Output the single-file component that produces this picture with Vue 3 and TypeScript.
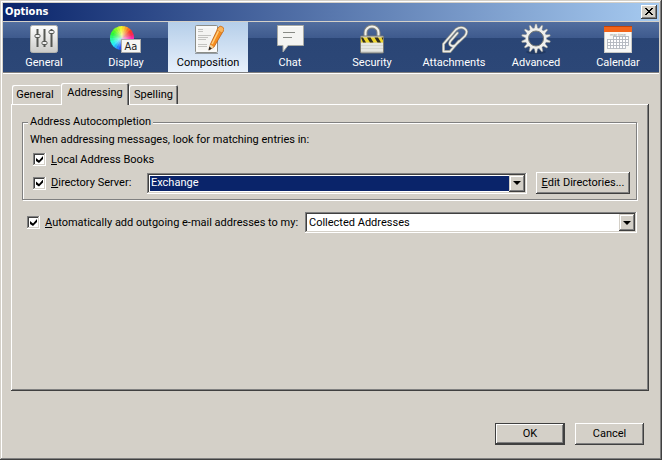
<script setup lang="ts">
import { ref } from 'vue'

interface Category {
  id: string
  label: string
}

const categories: Category[] = [
  { id: 'general', label: 'General' },
  { id: 'display', label: 'Display' },
  { id: 'composition', label: 'Composition' },
  { id: 'chat', label: 'Chat' },
  { id: 'security', label: 'Security' },
  { id: 'attachments', label: 'Attachments' },
  { id: 'advanced', label: 'Advanced' },
  { id: 'calendar', label: 'Calendar' },
]
const tabs = ['General', 'Addressing', 'Spelling']

const activeCategory = ref('composition')
const activeTab = ref('Addressing')
const useLocal = ref(true)
const useDirectory = ref(true)
const autoCollect = ref(true)
const directory = ref('Exchange')
const collectInto = ref('Collected Addresses')

// Colour wheel: 24 wedges, hue rising counter-clockwise
const wedges = Array.from({ length: 24 }, (_, i) => {
  const a = (i * 15 * Math.PI) / 180
  const b = ((i * 15 + 18) * Math.PI) / 180
  const point = (t: number) => `${(12 + 12 * Math.cos(t)).toFixed(2)} ${(16 - 12 * Math.sin(t)).toFixed(2)}`
  return { d: `M12 16L${point(a)}A12 12 0 0 0 ${point(b)}Z`, fill: `hsl(${(i * 15 + 335) % 360} 95% 55%)` }
})
const teeth = Array.from({ length: 14 }, (_, i) => (i * 360) / 14)
const gridCells = Array.from({ length: 28 }, (_, i) => i).filter((i) => i > 1 && i < 27)
</script>

<template>
  <main class="window">
    <header class="titlebar">
      <h1>Options</h1>
      <button class="close" type="button" aria-label="Close">
        <svg width="8" height="7" viewBox="0 0 8 7" shape-rendering="crispEdges">
          <path d="M0 0h2v1h1v1h2V1h1V0h2v1H7v1H6v1H5v1h1v1h1v1h1v1H6V6H5V5H3v1H2v1H0V6h1V5h1V4h1V3H2V2H1V1H0z" />
        </svg>
      </button>
    </header>

    <nav class="toolbar">
      <button
        v-for="c in categories"
        :key="c.id"
        type="button"
        class="category"
        :class="{ selected: activeCategory === c.id }"
        @click="activeCategory = c.id"
      >
        <svg class="icon" viewBox="0 0 32 32" aria-hidden="true">
          <g v-if="c.id === 'general'">
            <defs>
              <linearGradient id="plate" x2="0" y2="1"><stop stop-color="#fff" /><stop offset="1" stop-color="#cbcbc8" /></linearGradient>
            </defs>
            <rect x="2.5" y="3.5" width="27" height="27" rx="2" fill="url(#plate)" stroke="#b5b5b0" />
            <path d="M9.5 7v18M16.500 7v18M23.500 7v18" stroke="#555753" stroke-width="2" />
            <g fill="#eee" stroke="#555753">
              <rect x="7" y="12.500" width="5" height="3" rx="1" />
              <rect x="14" y="19.500" width="5" height="3" rx="1" />
              <rect x="21" y="8.500" width="5" height="3" rx="1" />
            </g>
          </g>
          <g v-else-if="c.id === 'display'">
            <defs>
              <radialGradient id="glow"><stop stop-color="#fff" stop-opacity=".75" /><stop offset=".8" stop-color="#fff" stop-opacity=".05" /></radialGradient>
            </defs>
            <path v-for="w in wedges" :key="w.d" :d="w.d" :fill="w.fill" />
            <circle cx="12" cy="16" r="12" fill="url(#glow)" />
            <rect x="11.500" y="17.500" width="19" height="13" fill="#f6f6f4" stroke="#aaa" />
            <text x="21" y="28" text-anchor="middle" class="sample">Aa</text>
          </g>
          <g v-else-if="c.id === 'composition'">
            <path d="M3 31.500h23" stroke="#555" stroke-opacity=".5" />
            <rect x="3.500" y="3.500" width="22" height="27" rx="1" fill="#f4f4f2" stroke="#8b8d88" />
            <path d="M5 5h19v24H5z" fill="none" stroke="#fff" />
            <path d="M6 7.500h5M6 9.500h5M6 13.500h13M6 15.500h10M6 17.500h8M6 22.500h9M6 24.500h9" stroke="#c3c3c0" />
            <path d="M17 28l1.500-6L26 6q2-3 4.500-1t.5 4.500L22 25z" fill="#f68d1e" stroke="#b45309" stroke-width=".7" />
            <path d="M20 22L27.500 7" stroke="#ffcf7c" stroke-width="1.500" />
            <path d="M26 6q2-3 4.500-1t.5 4.500l-1 1.500-5-3z" fill="#f9b45c" stroke="#c66a12" stroke-width=".5" />
            <path d="M17 28l1.300-5.500 3.500 2.600z" fill="#f0d29b" />
            <path d="M16.500 28.500l.8-4 2.500 2z" fill="#222" />
          </g>
          <g v-else-if="c.id === 'chat'">
            <path d="M3.500 3.500h26v20H14l-5 6.500v-6.500H3.500z" fill="#f4f4f2" stroke="#a8aaa5" />
            <path d="M4.500 4.500h24" stroke="#fff" />
            <path d="M9 10.500h12M9 15.500h9" stroke="#888a85" />
          </g>
          <g v-else-if="c.id === 'security'">
            <path d="M9.500 15v-4.500a6.500 6 0 0 1 13 0V15" fill="none" stroke="#85867f" stroke-width="4" />
            <path d="M9.500 15v-4.500a6.500 6 0 0 1 13 0V15" fill="none" stroke="#f2f2ed" stroke-width="2" />
            <rect x="4.500" y="14" width="23" height="17" rx="1" fill="#d5d6d0" stroke="#797a75" />
            <path d="M5 22h22M5 25h22M5 28h22" stroke="#f7f7f4" />
            <path d="M5 15.500h22v5H5z" fill="#eed52c" />
            <path d="M5 15.500h2l3 5H7zM11 15.500h3.500l3 5H14zM18.500 15.500H22l3 5h-3.500zM25.500 15.500H27v3z" fill="#302e20" />
          </g>
          <g v-else-if="c.id === 'attachments'" fill="none" stroke-linecap="round" stroke-linejoin="round">
            <path v-for="s in 2" :key="s" :stroke="s === 1 ? '#8b8e88' : '#eeeeea'" :stroke-width="s === 1 ? 3 : 1.600" d="M19.500 11l-7 8q-2 3 .5 4.500t5-1L27 14q3.500-5-.5-7.500t-8.500 1L5.500 22v7.500h6.500l9-10.500" />
          </g>
          <g v-else-if="c.id === 'advanced'">
            <ellipse cx="16" cy="30" rx="10" ry="2" fill="#172c50" opacity=".5" />
            <path v-for="t in teeth" :key="t" d="M14.200 7L15.300 2h1.400l1.100 5z" fill="#f0f0ed" stroke="#8c8e89" stroke-width=".5" :transform="`rotate(${t} 16 16.500)`" />
            <circle cx="16" cy="16.500" r="9" fill="none" stroke="#efefec" stroke-width="3" />
            <circle cx="16" cy="16.500" r="7.500" fill="none" stroke="#777a75" />
          </g>
          <g v-else>
            <rect x="2.500" y="4.500" width="27" height="26" fill="#f8f8f6" stroke="#c9c9c5" />
            <path d="M2 4h28v6H2z" fill="#f26419" />
            <path d="M2 4.500h28" stroke="#c44308" />
            <text x="16" y="13.500" text-anchor="middle" class="month">mar time</text>
            <rect
              v-for="n in gridCells"
              :key="n"
              :x="5.500 + (n % 7) * 3"
              :y="14.500 + Math.floor(n / 7) * 3"
              width="3"
              height="3"
              fill="#fff"
              stroke="#b4b9bf"
              stroke-width=".9"
            />
          </g>
        </svg>
        <span>{{ c.label }}</span>
      </button>
    </nav>

    <section class="content">
      <div class="tabs" role="tablist">
        <button
          v-for="t in tabs"
          :key="t"
          type="button"
          role="tab"
          class="tab"
          :class="{ active: activeTab === t }"
          :aria-selected="activeTab === t"
          @click="activeTab = t"
        >
          {{ t }}
        </button>
      </div>

      <div class="panel" role="tabpanel">
        <fieldset class="group">
          <legend>Address Autocompletion</legend>
          <p>When addressing messages, look for matching entries in:</p>
          <div class="row local">
            <input id="local" v-model="useLocal" type="checkbox" />
            <label for="local"><u>L</u>ocal Address Books</label>
          </div>
          <div class="row">
            <input id="server" v-model="useDirectory" type="checkbox" />
            <label for="server" class="server-label"><u>D</u>irectory Server:</label>
            <span class="combo focused">
              <select v-model="directory" aria-label="Directory Server">
                <option>Exchange</option>
              </select>
              <span class="drop"></span>
            </span>
            <button type="button" class="push edit"><span><u>E</u>dit Directories...</span></button>
          </div>
        </fieldset>

        <div class="row collect">
          <input id="collect" v-model="autoCollect" type="checkbox" />
          <label for="collect" class="collect-label"><u>A</u>utomatically add outgoing e-mail addresses to my:</label>
          <span class="combo">
            <select v-model="collectInto" aria-label="Address book for outgoing addresses">
              <option>Collected Addresses</option>
            </select>
            <span class="drop"></span>
          </span>
        </div>
      </div>
    </section>

    <footer class="actions">
      <button type="button" class="push default">OK</button>
      <button type="button" class="push">Cancel</button>
    </footer>
  </main>
</template>

<style>
body {
  background: #d4d0c8;
}
</style>

<style scoped>
* {
  box-sizing: border-box;
}
.window {
  min-height: 100vh;
  display: flex;
  flex-direction: column;
  padding: 1px;
  background: #d4d0c8;
  box-shadow: inset -1px -1px #404040, inset 1px 1px #d4d0c8, inset -2px -2px #808080, inset 2px 2px #fff;
  color: #000;
  font: 11px/14px Tahoma, Roboto, "DejaVu Sans Condensed", sans-serif;
}
button,
select {
  font: inherit;
  color: inherit;
}
.titlebar {
  display: flex;
  align-items: center;
  justify-content: space-between;
  height: 18px;
  margin: 2px 2px 1px;
  padding: 0 2px;
  background: linear-gradient(90deg, #0a246a, #a6caf0);
}
h1 {
  margin: 0;
  color: #fff;
  font: bold 11px/18px Tahoma, "DejaVu Sans Condensed", sans-serif;
}
.close {
  display: grid;
  place-items: center;
  width: 16px;
  height: 14px;
  padding: 0 1px 1px 0;
  border: 0;
  background: #d4d0c8;
  box-shadow: inset -1px -1px #404040, inset 1px 1px #fff, inset -2px -2px #808080;
}
.toolbar {
  display: flex;
  gap: 2px;
  height: 52px;
  margin: 0 2px;
  padding: 0 1px;
  border-bottom: 1px solid #fff;
  box-shadow: inset 0 -1px #808080;
  background: linear-gradient(#526e9f, #3e5a8d 16px, #2a4575 16px, #2c4777);
}
.category {
  flex: 0 0 80px;
  display: flex;
  flex-direction: column;
  align-items: center;
  height: 50px;
  padding: 0;
  border: 0;
  background: none;
  color: #fff;
}
.category span {
  line-height: 18px;
}
.category.selected {
  background: linear-gradient(#b5cee9, #e8f1fc);
  color: #000;
}
.icon {
  width: 32px;
  height: 32px;
  flex: none;
}
.sample {
  font: 11px "DejaVu Sans Condensed", sans-serif;
  fill: #222;
}
.month {
  font-size: 4px;
  fill: #999;
}
.content {
  flex: 1;
  display: flex;
  flex-direction: column;
  padding: 8px 12px 0 10px;
}
.tabs {
  display: flex;
  align-items: flex-end;
  height: 22px;
  padding-left: 1px;
}
.tab {
  width: 49px;
  height: 19px;
  padding: 0;
  border: 0;
  border-radius: 2px 2px 0 0;
  background: #d4d0c8;
  box-shadow: inset 1px 1px #fff, inset -1px 0 #404040, inset -2px 0 #808080;
}
.tab:first-child {
  padding-right: 3px;
  box-shadow: inset 1px 1px #fff;
}
.tab.active {
  position: relative;
  width: 68px;
  height: 22px;
  margin-bottom: -1px;
  padding-bottom: 3px;
}
.panel {
  flex: 1;
  padding: 11px 12px 0 11px;
  box-shadow: inset -1px -1px #404040, inset 1px 1px #fff, inset -2px -2px #808080;
}
.group {
  min-width: 0;
  margin: 0;
  padding: 4px 6px 5px 7px;
  border: 1px solid #808080;
  box-shadow: 1px 1px #fff, inset 1px 1px #fff;
}
legend {
  padding: 0 2px;
  margin-left: -2px;
  background: #d4d0c8;
}
p {
  margin: 0;
}
.row {
  display: flex;
  align-items: center;
}
.row.local {
  height: 25px;
}
.group .row {
  padding-left: 3px;
}
.collect {
  padding: 12px 0 0 5px;
}
input[type="checkbox"] {
  appearance: none;
  display: grid;
  place-items: center;
  flex: none;
  width: 13px;
  height: 13px;
  margin: 0 5px 0 0;
  background: #fff;
  box-shadow: inset -1px -1px #fff, inset 1px 1px #808080, inset -2px -2px #d4d0c8, inset 2px 2px #404040;
}
input[type="checkbox"]:checked::before {
  content: "";
  width: 7px;
  height: 7px;
  background: #000;
  clip-path: polygon(0 28%, 43% 64%, 100% 0, 100% 42%, 43% 100%, 0 70%);
}
.server-label {
  flex: 0 0 96px;
}
.collect-label {
  flex: 0 0 260px;
}
label {
  white-space: nowrap;
}
.combo {
  position: relative;
  flex: 1;
  min-width: 0;
  height: 21px;
  padding: 2px;
  background: #fff;
  box-shadow: inset -1px -1px #fff, inset 1px 1px #808080, inset -2px -2px #d4d0c8, inset 2px 2px #404040;
}
select {
  appearance: none;
  display: block;
  width: 100%;
  height: 17px;
  padding: 0 18px 0 2px;
  border: 0;
  border-radius: 0;
  outline: 0;
  background: transparent;
}
.focused select {
  border: 1px solid #fff;
  padding-left: 1px;
  background: #0a246a;
  color: #fff;
}
.drop {
  position: absolute;
  top: 2px;
  right: 2px;
  width: 16px;
  height: 17px;
  display: grid;
  place-items: center;
  background: #d4d0c8;
  box-shadow: inset -1px -1px #404040, inset 1px 1px #d4d0c8, inset -2px -2px #808080, inset 2px 2px #fff;
  pointer-events: none;
}
.drop::before {
  content: "";
  border: 4px solid transparent;
  border-top-color: #000;
  border-bottom: 0;
}
.push {
  width: 69px;
  height: 22px;
  padding: 0;
  border: 0;
  background: #d4d0c8;
  box-shadow: inset -1px -1px #404040, inset 1px 1px #fff, inset -2px -2px #808080;
}
.edit {
  flex: none;
  width: 94px;
  margin-left: 9px;
}
.default {
  width: 70px;
  box-shadow: inset 0 0 0 1px #404040, inset -2px -2px #404040, inset 2px 2px #fff, inset -3px -3px #808080;
}
.actions {
  display: flex;
  justify-content: flex-end;
  gap: 10px;
  padding: 32px 17px 14px;
}
</style>
